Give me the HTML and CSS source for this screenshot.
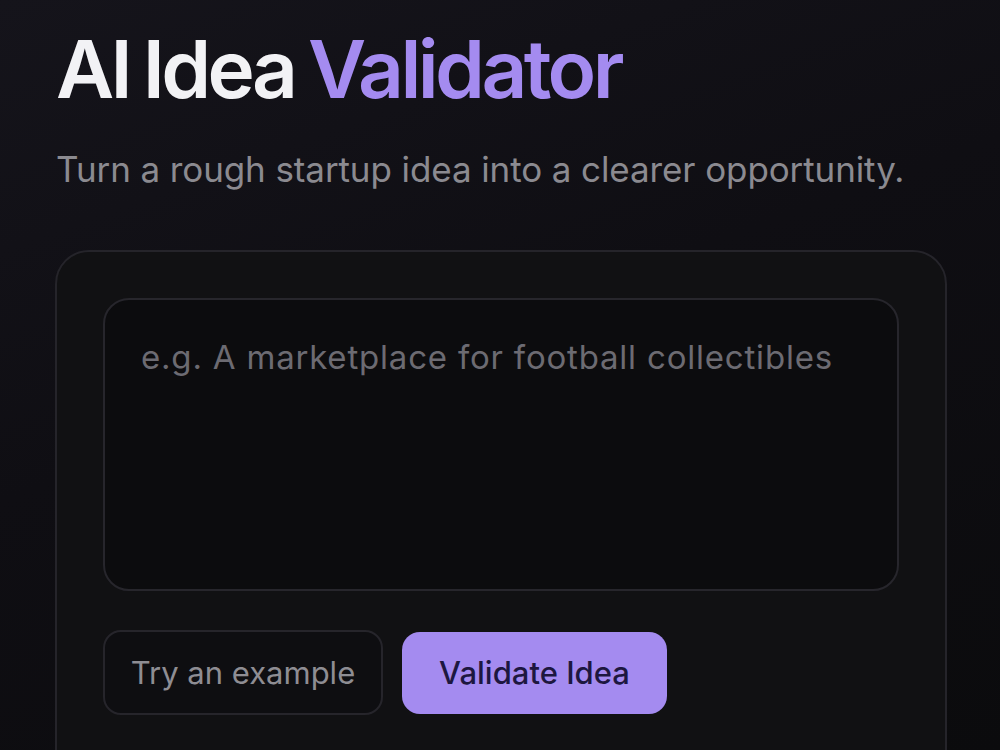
FILE: index.html
```html
<!DOCTYPE html>
<html lang="en">
<head>
<meta charset="utf-8">
<title>AI Idea Validator</title>
<link rel="stylesheet" href="styles.css">
</head>
<body>
<main class="page">
  <h1 class="title">AI Idea <span class="accent">Validator</span></h1>
  <p class="subtitle">Turn a rough startup idea into a clearer opportunity.</p>
  <section class="card">
    <textarea class="idea" placeholder="e.g. A marketplace for football collectibles"></textarea>
    <div class="actions">
      <button class="btn btn-ghost" type="button">Try an example</button>
      <button class="btn btn-primary" type="button">Validate Idea</button>
    </div>
  </section>
</main>
</body>
</html>
```

FILE: styles.css
```css
html, body {
  margin: 0;
  height: 100%;
}
body {
  background: linear-gradient(160deg, #15141b 0%, #0f0e13 45%, #0b0b0d 100%);
  font-family: Inter, "Noto Sans", sans-serif;
  overflow: hidden;
}
.page {
  padding: 29px 0 0 56px;
}
.title {
  margin: 0;
  font-size: 80px;
  line-height: 80px;
  font-weight: 600;
  letter-spacing: -3.6px;
  word-spacing: -3px;
  color: #f2f2f5;
}
.accent {
  color: #a48bf0;
}
.subtitle {
  margin: 38px 0 0 0;
  font-size: 35px;
  line-height: 44px;
  letter-spacing: -0.1px;
  color: #8b8a90;
  font-weight: 400;
}
.card {
  margin-top: 59px;
  margin-left: -1px;
  box-sizing: border-box;
  width: 892px;
  height: 560px;
  border: 2px solid #25242a;
  border-radius: 34px;
  background: #111113;
  padding: 46px 46px 0 46px;
}
.idea {
  display: block;
  box-sizing: border-box;
  width: 796px;
  height: 293px;
  border: 2px solid #27262c;
  border-radius: 26px;
  background: #0c0c0e;
  padding: 36px 36px;
  resize: none;
  font-family: inherit;
  font-size: 33px;
  line-height: 42px;
  letter-spacing: 0.8px;
  color: #e6e6ea;
  outline: none;
}
.idea::placeholder {
  color: #6c6b72;
}
.actions {
  display: flex;
  align-items: center;
  gap: 19px;
  margin-top: 39px;
}
.btn {
  font-family: inherit;
  font-size: 31px;
  line-height: 40px;
  border-radius: 18px;
  box-sizing: border-box;
  cursor: pointer;
  padding: 0;
}
.btn-ghost {
  width: 280px;
  height: 85px;
  background: #0e0e11;
  border: 2px solid #26252b;
  color: #8e8d93;
}
.btn-primary {
  width: 265px;
  height: 82px;
  background: #a48bf0;
  border: none;
  color: #1d1740;
  font-weight: 500;
}
```
